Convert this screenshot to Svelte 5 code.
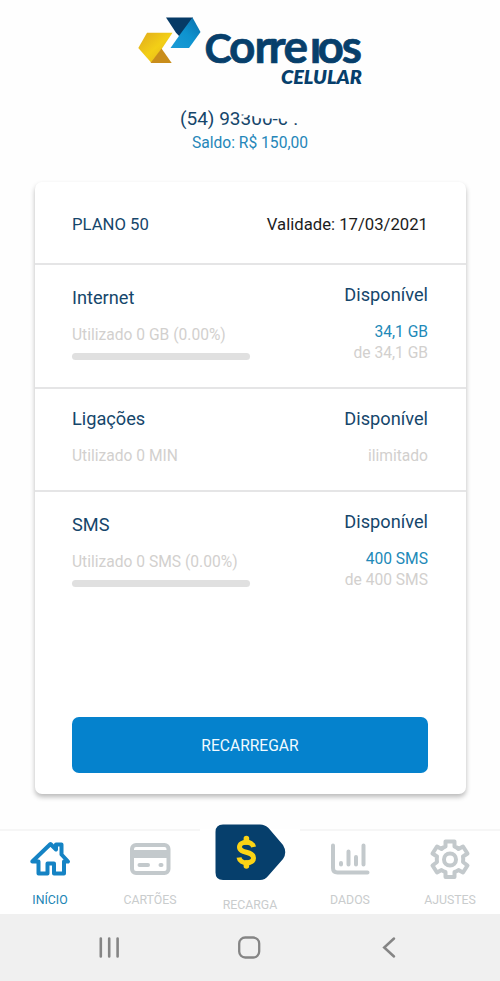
<script>
  const plans = [
    { name: 'Internet', used: 'Utilizado 0 GB (0.00%)', left: '34,1 GB', total: 'de 34,1 GB', bar: true, cls: 'internet' },
    { name: 'Ligações', used: 'Utilizado 0 MIN', left: '', total: 'ilimitado', bar: false, cls: 'calls' },
    { name: 'SMS', used: 'Utilizado 0 SMS (0.00%)', left: '400 SMS', total: 'de 400 SMS', bar: true, cls: 'sms' }
  ];
</script>

<div class="screen">
  <header>
    <svg class="logo" width="240" height="82" viewBox="130 8 240 82">
      <defs>
        <linearGradient id="blue" x1="0" y1="1" x2="1" y2="0"><stop offset="0" stop-color="#1c9bd6" /><stop offset=".5" stop-color="#0e93cf" /><stop offset="1" stop-color="#0a6da9" /></linearGradient>
        <linearGradient id="gold" x1="0" y1="0" x2="1" y2="1"><stop offset="0" stop-color="#dfa91d" /><stop offset=".5" stop-color="#f3cf16" /><stop offset="1" stop-color="#e3b11c" /></linearGradient>
      </defs>
      <path d="M166 17.500H193L180 37L176 32.700Z" fill="#063a66" />
      <path d="M192.500 17.500L200.500 32L189 48H170.500L180 34.500Z" fill="url(#blue)" />
      <path d="M147 32.700H172.500L162 48.500L151.500 63L138.300 48Z" fill="url(#gold)" />
      <path d="M150.500 63L161.500 48.500L171.700 63Z" fill="#c98d1b" />
      <g fill="#073f6b" font-family="Lato, sans-serif">
        <text y="62.500" font-size="46" font-weight="700" stroke="#073f6b" stroke-width=".7"><tspan x="204.500" font-size="41">C</tspan><tspan x="229 254.500 268.500 283.500 309.800 317.500 341.800">orreios</tspan></text>
        <rect x="309" y="22" width="12" height="15.800" fill="#fefefe" />
        <text x="281" y="84" font-size="18" font-weight="800" font-style="italic" textLength="81" lengthAdjust="spacingAndGlyphs">CELULAR</text>
      </g>
    </svg>
    <div class="phone">(54) 93300-0 .
      <svg class="smudge" width="66" height="20" viewBox="0 0 66 20"><path d="M0 0H66V17L50 15.500L46 14L41 11.500L22 11.500L12 8.500L0 7Z" fill="#fefefe" /></svg>
    </div>
    <div class="balance">Saldo: R$ 150,00</div>
  </header>

  <main>
    <section class="top"><span>PLANO 50</span><span class="valid">Validade: 17/03/2021</span></section>
    {#each plans as p}
      <section class={p.cls}>
        <div class="col">
          <h2>{p.name}</h2>
          <p>{p.used}</p>
          {#if p.bar}<div class="bar"></div>{/if}
        </div>
        <div class="col right">
          <h2>Disponível</h2>
          {#if p.left}<p class="left">{p.left}</p>{/if}
          <p>{p.total}</p>
        </div>
      </section>
    {/each}
    <button>RECARREGAR</button>
  </main>

  <nav>
    <div class="item active">
      <svg width="44" height="44" viewBox="28 838 44 44" fill="none" stroke="#1583c4" stroke-width="4" stroke-linejoin="round"><path d="M32.300 861.500L50.500 844L56 849.500V844.500H61.500V854.500L68 861.500H64V873.500H54V863.500H47.500V873.500H38.500V861.500Z" /></svg>
      <span>INÍCIO</span>
    </div>
    <div class="item">
      <svg width="44" height="44" viewBox="128 838 44 44"><rect x="132" y="845" width="36.500" height="28" rx="4" fill="none" stroke="#c3c9cc" stroke-width="4" /><path d="M131 850H169V858H131Z" fill="#c3c9cc" /><path d="M139.500 865H148M160.500 865H161.500" stroke="#c3c9cc" stroke-width="4" stroke-linecap="round" /></svg>
      <span>CARTÕES</span>
    </div>
    <div class="item center">
      <svg width="76" height="64" viewBox="212 820 76 64"><path d="M223 824.500H260Q265 824.500 268.500 828L283 845Q287.500 852.500 283 859L268.500 875.500Q265 880 260 880H223Q215.500 880 215.500 872.500V832Q215.500 824.500 223 824.500Z" fill="#063f6c" /><path d="M253.500 847C252.500 840.500 239.500 841 239.500 847C239.500 854 253.500 850.500 253.500 858C253.500 864.500 240 864.500 239 857.500" fill="none" stroke="#fbd315" stroke-width="5" /><path d="M246.400 838.500V842M246.400 863V866" stroke="#fbd315" stroke-width="5.600" stroke-linecap="round" /></svg>
      <span>RECARGA</span>
    </div>
    <div class="item">
      <svg width="44" height="44" viewBox="328 838 44 44" fill="none" stroke="#c3c9cc" stroke-width="4" stroke-linecap="round"><path d="M333 845.500V868Q333 872.500 337.500 872.500H367.500M341 863V864.500M348.500 851.500V864.500M356 857V864.500M363.500 845.500V864.500" /></svg>
      <span>DADOS</span>
    </div>
    <div class="item">
      <svg width="44" height="44" viewBox="428 837 44 44" fill="none" stroke="#c3c9cc" stroke-width="4" stroke-linejoin="round"><path d="M445.500 840.500H454.500V845.500Q456.500 846 458.500 848L463 845.500L467.500 852.500L463 855.500Q463.500 858.500 463 861L467.500 864.500L463 871.500L458.500 869Q456.500 870.500 454.500 871V876H445.500V871Q443.500 870.500 441.500 869L437 871.500L432.500 864.500L437 861Q436.500 858.500 437 855.500L432.500 852.500L437 845.500L441.500 848Q443.500 846 445.500 845.500Z" /><circle cx="450" cy="858.500" r="6" /></svg>
      <span>AJUSTES</span>
    </div>
  </nav>

  <footer>
    <svg width="24" height="24" viewBox="0 0 24 24" stroke="#858585" stroke-width="2.600" stroke-linecap="round"><path d="M2.800 2.500V20.500M11.200 2.500V20.500M19.600 2.500V20.500" /></svg>
    <svg width="24" height="24" viewBox="0 0 24 24" fill="none" stroke="#858585" stroke-width="2.300"><rect x="1.200" y="1.500" width="20" height="20" rx="6" /></svg>
    <svg width="24" height="24" viewBox="0 0 24 24" fill="none" stroke="#858585" stroke-width="2.500" stroke-linecap="round"><path d="M16 2.500L6.200 11.500L16 20.500" /></svg>
  </footer>
</div>

<style>
  :global(body) { margin: 0; }
  .screen { box-sizing: border-box; width: 500px; height: 981px; display: flex; flex-direction: column; background: #fefefe; font-family: Roboto, sans-serif; color: #15466b; overflow: hidden; }
  header { height: 182px; box-sizing: border-box; padding-top: 8px; display: flex; flex-direction: column; align-items: center; flex: none; }
  .logo { display: block; }
  .phone { position: relative; margin-top: 18px; font-size: 19px; line-height: 22px; height: 22px; width: 140px; white-space: nowrap; }
  .smudge { position: absolute; left: 59px; top: -1px; }
  .balance { margin-top: 3px; font-size: 15.6px; line-height: 21px; color: #2586b9; }
  main { box-sizing: border-box; width: 431px; height: 612px; margin: 0 auto; flex: none; display: flex; flex-direction: column; background: #fff; border-radius: 7px; box-shadow: 0 3px 5px rgba(0, 0, 0, .27); }
  section { box-sizing: border-box; display: flex; justify-content: space-between; padding: 0 37.5px; border-bottom: 2px solid #e5e5e6; }
  .top { height: 83px; align-items: center; font-size: 16.700px; padding-top: 4px; }
  .valid { color: #1c1c1c; }
  .internet { height: 124px; }
  .calls { height: 103px; }
  .sms { height: 225px; border-bottom: 0; }
  h2 { margin: 18px 0 0; font-size: 18.200px; line-height: 24px; font-weight: 400; }
  .internet .col:first-child h2, .sms .col:first-child h2 { margin-top: 21px; }
  p { margin: 0; font-size: 15.600px; line-height: 21px; color: #d2d0ce; }
  .col > h2 + p { margin-top: 15px; }
  .right { text-align: right; }
  .right p.left { color: #2189b8; }
  .bar { width: 178px; height: 7px; margin-top: 7px; border-radius: 4px; background: #e0e0e0; }
  button { display: block; width: 356px; height: 56px; margin: 0 auto; padding: 2px 0 0; border: 0; border-radius: 7px; background: #0582cd; color: #f0faff; font: 400 15.600px Roboto, sans-serif; }
  nav { display: flex; height: 85px; margin-top: 35px; background: #fff; flex: none; }
  .item { box-sizing: border-box; width: 100px; display: flex; flex-direction: column; align-items: center; border-top: 2px solid #f6f6f6; padding-top: 7px; color: #c9cccd; }
  .item span { font-size: 12.300px; line-height: 16px; margin-top: 10px; }
  .active { color: #2084b4; }
  .center { border: 0; padding: 0; }
  .center svg { margin-top: -9px; flex: none; }
  .center span { margin-top: 13px; }
  footer { height: 67px; flex: none; background: #f0f0f0; display: flex; justify-content: space-between; align-items: center; padding: 0 98px; }
</style>
